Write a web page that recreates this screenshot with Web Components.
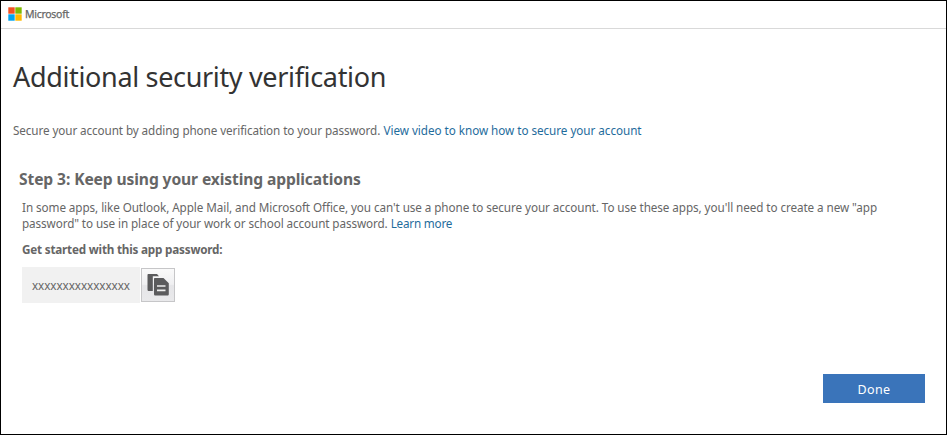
<!DOCTYPE html>
<html lang="en"><head><meta charset="utf-8"><title>Additional security verification</title>
<style>
html,body{margin:0;height:100%;background:#fff}
body{font:11.7px/16px "Noto Sans","Open Sans",sans-serif;color:#666}
</style></head><body>
<verification-page>
  <brand-bar slot="header"></brand-bar>
  <page-intro>Additional security verification
    <fit-text slot="lead" style="--ls:-.09px">Secure your account by adding phone verification to your password.</fit-text>
    <text-link slot="link" style="--ls:-.04px">View video to know how to secure your account</text-link>
  </page-intro>
  <step-section>Step 3: Keep using your existing applications
    <div slot="body"><fit-text style="--ls:-.073px">In some apps, like Outlook, Apple Mail, and Microsoft Office, you can't use a phone to secure your account. To use these apps, you'll need to create a new "app</fit-text><br><fit-text style="--ls:-.092px">password" to use in place of your work or school account password.</fit-text> <text-link style="--ls:-.2px">Learn more</text-link></div>
    <app-password slot="password">xxxxxxxxxxxxxxxx</app-password>
  </step-section>
  <action-button slot="footer">Done</action-button>
</verification-page>
<script>
const define=(name,html)=>customElements.define(name,class extends HTMLElement{
  constructor(){super();this.attachShadow({mode:'open'}).innerHTML=html}
});
define('verification-page',`<style>:host{display:flex;flex-direction:column;box-sizing:border-box;height:100vh;min-height:435px;border:1px solid #000}
main{flex:1}footer{display:flex;justify-content:flex-end;padding:0 21px 31px 0}</style>
<slot name="header"></slot><main><slot></slot></main><footer><slot name="footer"></slot></footer>`);
define('brand-bar',`<style>:host{display:flex;align-items:center;gap:3px;box-sizing:border-box;height:28px;padding:0 0 1px 7px;border-bottom:1px solid #d9d9d9;font-size:10.5px;letter-spacing:-.28px;color:#666;-webkit-text-stroke:.25px #666}
svg{display:block;width:14px;height:14px}</style>
<svg viewBox="0 0 14 14"><path fill="#f25022" d="M.3.3h6.4v6.4H.3z"/><path fill="#7fba00" d="M7.3.3h6.4v6.4H7.3z"/><path fill="#00a4ef" d="M.3 7.3h6.4v6.4H.3z"/><path fill="#ffb900" d="M7.3 7.3h6.4v6.4H7.3z"/></svg><span>Microsoft</span>`);
define('page-intro',`<style>:host{display:block;padding:28px 12px 0}
h1{margin:0;font-weight:400;font-size:27px;line-height:40px;letter-spacing:-.34px;color:#333}
p{margin:25px 0 0;word-spacing:.3px}</style><h1><slot></slot></h1><p><slot name="lead"></slot> <slot name="link"></slot></p>`);
define('fit-text',`<style>:host{display:inline;letter-spacing:var(--ls,0);word-spacing:0}</style><slot></slot>`);
define('text-link',`<style>:host{display:inline;letter-spacing:var(--ls,0);word-spacing:0}a{color:#1f6c9c;cursor:pointer}</style><a><slot></slot></a>`);
define('step-section',`<style>:host{display:block;padding:30px 18px 0}
h2{margin:0;font-size:15.6px;line-height:22px;letter-spacing:-.1px}
section{padding:9px 0 0 3px;white-space:nowrap}
h3{margin:10px 0;font-size:11.7px;line-height:16px;letter-spacing:-.2px}</style>
<h2><slot></slot></h2><section><slot name="body"></slot><h3>Get started with this app password:</h3><slot name="password"></slot></section>`);
define('app-password',`<style>:host{display:flex;align-items:center;gap:1px}
span{box-sizing:border-box;width:118px;height:36px;padding-left:10px;line-height:36px;letter-spacing:-.06px;background:#f1f1f1}
button{box-sizing:border-box;width:34px;height:34px;padding:0;border:1px solid #c6c6c8;background:linear-gradient(#fafafa,#efeff1 48%,#e5e5e8 52%,#e9e9eb)}
svg{display:block}</style>
<span><slot></slot></span><button aria-label="Copy"><svg width="32" height="32" viewBox="0 0 32 32"><path fill="#5b5b5d" d="M6.500 5H15l2 2.200h-6.200V22H7c-1 0-1.500-.5-1.500-1.500V6c0-.6.4-1 1-1z"/><path fill="#5b5b5d" d="M13 9h8.500l5.300 5.300V25c0 1-.5 1.500-1.500 1.500H13.500c-1 0-1.500-.5-1.500-1.500V10c0-.6.4-1 1-1z"/><path stroke="#eee" stroke-width="1.700" d="M15 17h8.500M15 21.400h8.500"/></svg></button>`);
define('action-button',`<style>:host{display:block}button{display:block;width:102px;height:29px;padding:2px 0 0;border:0;background:#3a74ba;color:#fff;font:12.5px/26px "Noto Sans",sans-serif;letter-spacing:.4px}</style><button><slot></slot></button>`);
</script></body></html>
